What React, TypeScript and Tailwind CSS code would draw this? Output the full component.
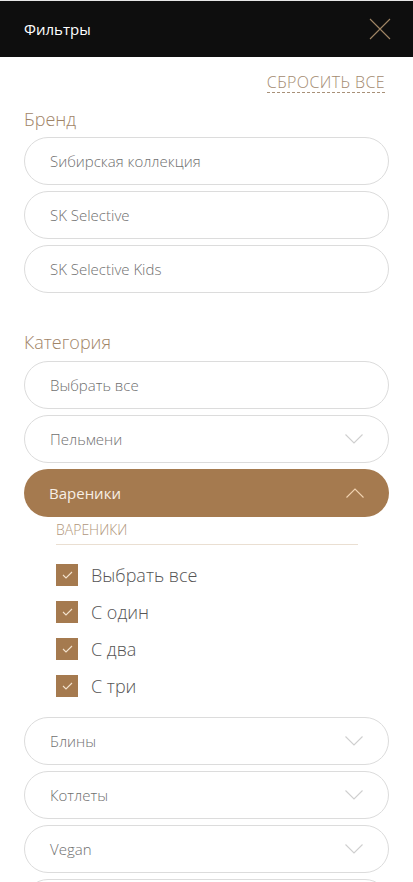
import React from "react";

const font = { fontFamily: '"Open Sans", "Noto Sans", sans-serif' };

function Chevron({ up = false, color }: { up?: boolean; color: string }) {
  return (
    <svg width="18" height="10" viewBox="0 0 18 10" fill="none">
      <path
        d={up ? "M0.5 9.5 L9 1 L17.5 9.5" : "M0.5 0.5 L9 9 L17.5 0.5"}
        stroke={color}
        strokeWidth="1.1"
      />
    </svg>
  );
}

function Pill({ label, chevron = false }: { label: string; chevron?: boolean }) {
  return (
    <div className="flex h-[48px] items-center justify-between rounded-full border border-[#dcdcdc] bg-white pl-[25px] pr-[25px]">
      <span className="text-[15px] font-light text-[#6f6f6f]">{label}</span>
      {chevron && <Chevron color="#cfcfcf" />}
    </div>
  );
}

function Check({ label }: { label: string }) {
  return (
    <div className="flex h-[22px] items-center gap-[13px]">
      <span className="flex h-[22px] w-[22px] items-center justify-center bg-[#a57a4f]">
        <svg width="11" height="8" viewBox="0 0 11 8" fill="none">
          <path d="M1 4 L4 7 L10 1" stroke="#f3e3cf" strokeWidth="1.1" />
        </svg>
      </span>
      <span className="text-[18px] font-light text-[#555555]">{label}</span>
    </div>
  );
}

export default function App() {
  return (
    <div className="min-h-[882px] w-[413px] overflow-hidden bg-white" style={font}>
      <header className="flex h-[57px] items-center justify-between border-t border-[#e6e6e6] bg-[#0e0e0e] pl-[24px] pr-[22px]">
        <span className="text-[15px] text-white">Фильтры</span>
        <svg width="22" height="22" viewBox="0 0 22 22" fill="none">
          <path d="M1 1 L21 21 M21 1 L1 21" stroke="#a08665" strokeWidth="1.1" />
        </svg>
      </header>

      <div className="px-[24px]">
        <div className="mt-[16px] flex justify-end pr-[4px]">
          <span className="border-b border-dashed border-[#a89078] pb-[1px] text-[16px] font-light leading-[18px] tracking-[0.4px] text-[#a38a70]">
            СБРОСИТЬ ВСЕ
          </span>
        </div>

        <div className="mt-[15px] text-[18px] font-light leading-[22px] text-[#9f8467]">Бренд</div>
        <div className="mt-[7px] flex flex-col gap-[6px]">
          <Pill label="Sибирская коллекция" />
          <Pill label="SK Selective" />
          <Pill label="SK Selective Kids" />
        </div>

        <div className="mt-[38px] text-[18px] font-light leading-[22px] text-[#9f8467]">Категория</div>
        <div className="mt-[8px] flex flex-col gap-[6px]">
          <Pill label="Выбрать все" />
          <Pill label="Пельмени" chevron />
          <div className="flex h-[48px] items-center justify-between rounded-full bg-[#a57a4f] pl-[25px] pr-[25px]">
            <span className="text-[15px] text-[#f7efe6]">Вареники</span>
            <Chevron up color="#f1d3b2" />
          </div>
        </div>

        <div className="px-[32px]">
          <div className="mt-[6px] w-[302px] border-b border-[#eadfd2] pb-[7px] text-[14px] font-light leading-[14px] text-[#b0967b]">
            ВАРЕНИКИ
          </div>
          <div className="mt-[19px] flex flex-col gap-[15px]">
            <Check label="Выбрать все" />
            <Check label="С один" />
            <Check label="С два" />
            <Check label="С три" />
          </div>
        </div>

        <div className="mt-[20px] flex flex-col gap-[6px]">
          <Pill label="Блины" chevron />
          <Pill label="Котлеты" chevron />
          <Pill label="Vegan" chevron />
          <div className="h-[48px] rounded-full border border-[#dcdcdc] bg-white" />
        </div>
      </div>
    </div>
  );
}
